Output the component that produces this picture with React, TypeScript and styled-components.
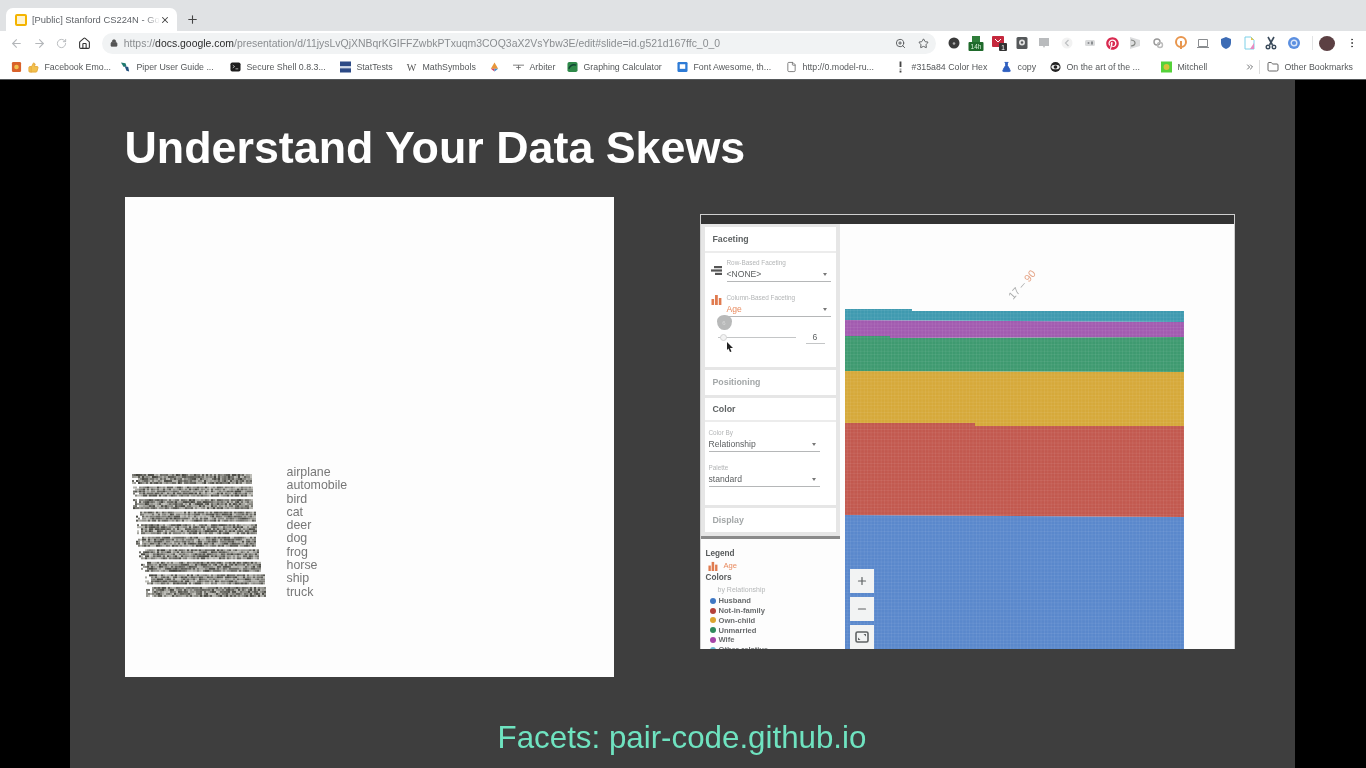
import React from 'react';
import styled, { createGlobalStyle } from 'styled-components';
import { ArrowLeft, ArrowRight, ChevronsRight, File, FlaskConical, Folder, Home, Lock, Minus, MoreVertical, Plus, RotateCw, Star, ThumbsUp, X, ZoomIn } from 'lucide-react';
import { FaPinterest } from 'react-icons/fa';

const GlobalStyle = createGlobalStyle`
  html, body {
    margin: 0;
    height: 768px;
    overflow: hidden;
    background: #000;
    font-family: 'Liberation Sans', Arial, sans-serif;
  }
`;

const Page = styled.div`
  width: 1366px;
  height: 768px;
  display: flex;
  flex-direction: column;
  overflow: hidden;
`;

const Chrome = styled.div`
  flex: none;
  height: 80px;
  background: #fff;
  border-bottom: 1px solid #55585a;
  box-sizing: border-box;
  filter: blur(0.35px);
`;

const TabStrip = styled.div`
  height: 31px;
  background: #e0e2e4;
  display: flex;
  align-items: flex-end;
  padding-left: 6px;
`;

const Tab = styled.div`
  width: 171px;
  height: 23px;
  background: #fff;
  border-radius: 7px 7px 0 0;
  display: flex;
  align-items: center;
  box-sizing: border-box;
  padding: 0 7px 0 9px;
  color: #5f6368;
  font-size: 9.4px;
`;

const TabIcon = styled.div`
  width: 12px;
  height: 12px;
  border: 2.5px solid #f4b400;
  border-radius: 2px;
  background: #fff3cf;
  box-sizing: border-box;
  margin-right: 5px;
  flex: none;
`;

const TabTitle = styled.span`
  flex: 1;
  white-space: nowrap;
  overflow: hidden;
  mask-image: linear-gradient(90deg, #000 88%, transparent 100%);
`;

const NewTab = styled.div`
  height: 23px;
  margin-left: 9px;
  display: flex;
  align-items: center;
  color: #444;
`;

const Toolbar = styled.div`
  height: 24px;
  display: flex;
  align-items: center;
  padding-left: 5px;
`;

const NavButton = styled.div<{ $color?: string; $left?: number }>`
  width: 22.7px;
  margin-left: ${(p) => p.$left || 0}px;
  display: flex;
  justify-content: center;
  color: ${(p) => p.$color || '#b4b7ba'};
`;

const Omnibox = styled.div`
  width: 834px;
  height: 21px;
  margin-left: 6px;
  background: #f1f3f4;
  border-radius: 11px;
  display: flex;
  align-items: center;
  padding: 0 1px 0 8px;
  box-sizing: border-box;
  color: #8a8d90;
  font-size: 10.45px;
  flex: none;
`;

const Url = styled.span`
  flex: 1;
  margin-left: 6px;
  white-space: nowrap;
  b {
    font-weight: 400;
    color: #2c2c2c;
  }
`;

const OmniIcon = styled.div`
  width: 23px;
  display: flex;
  justify-content: center;
  color: #55585a;
`;

const Extensions = styled.div`
  display: flex;
  align-items: center;
  margin-left: 6.6px;
`;

const ExtensionSlot = styled.div`
  width: 22.7px;
  height: 24px;
  display: flex;
  align-items: center;
  justify-content: center;
`;

const ExtensionDivider = styled.div`
  width: 1px;
  height: 14px;
  margin-left: 7px;
  background: #e3e4e5;
`;

const Avatar = styled.div`
  width: 16px;
  height: 15px;
  border-radius: 50%;
  background: #5c4043;
  margin-left: 6px;
`;

const BookmarkBar = styled.div`
  height: 24px;
  display: flex;
  align-items: center;
  padding-left: 10.5px;
  font-size: 8.8px;
  color: #55585a;
`;

const Bookmark = styled.div<{ $width: number }>`
  width: ${(p) => p.$width}px;
  flex: none;
  display: flex;
  align-items: center;
  gap: 6px;
  white-space: nowrap;
`;

const FavSlot = styled.div`
  width: 11px;
  height: 12px;
  flex: none;
  display: flex;
  align-items: center;
  justify-content: center;
`;

const BarDivider = styled.div`
  width: 1px;
  height: 14px;
  background: #ddd;
  margin-right: 7px;
`;

const Stage = styled.div`
  flex: 1;
  background: #000;
  display: flex;
  justify-content: center;
  padding-right: 1px;
`;

const Slide = styled.div`
  width: 1225px;
  margin-right: 1px;
  background: #3e3e3e;
  display: flex;
  flex-direction: column;
  box-sizing: border-box;
  padding: 43px 0 0 55px;
  filter: blur(0.3px);
`;

const Title = styled.h1`
  margin: 0;
  height: 49px;
  line-height: 49px;
  font-size: 44.8px;
  font-weight: 700;
  color: #fff;
`;

const Figures = styled.div`
  display: flex;
  align-items: flex-start;
  margin-top: 25px;
`;

const ImagePanel = styled.div`
  width: 489px;
  height: 480px;
  background: #fdfdfd;
  box-sizing: border-box;
  padding: 0 0 77px 7px;
  display: flex;
  align-items: flex-end;
  flex: none;
`;

const ClassList = styled.ul`
  list-style: none;
  margin: 0 0 1px 19px;
  padding: 0;
  font-size: 12.4px;
  line-height: 13.32px;
  color: #777;
`;

const FacetsPanel = styled.div`
  width: 535px;
  height: 435px;
  margin: 17px 0 0 86px;
  flex: none;
  border: 1px solid #cfcfcf;
  border-bottom: 0;
  box-sizing: border-box;
  background: #fdfdfd;
  display: flex;
  flex-direction: column;
  overflow: hidden;
`;

const FacetsTop = styled.div`
  height: 9px;
  background: #333;
  flex: none;
`;

const FacetsBody = styled.div`
  flex: 1;
  min-height: 0;
  display: flex;
`;

const Sidebar = styled.div`
  width: 139px;
  flex: none;
  display: flex;
  flex-direction: column;
  background: #fdfdfd;
`;

const Cards = styled.div`
  background: #e6e6e6;
  height: 315px;
  box-sizing: border-box;
  padding: 3px 4px;
  display: flex;
  flex-direction: column;
  gap: 3px;
  border-bottom: 3px solid #8a8a8a;
  flex: none;
`;

const Card = styled.div<{ $height: number }>`
  height: ${(p) => p.$height}px;
  background: #fff;
  box-sizing: border-box;
  flex: none;
`;

const CardHead = styled.div<{ $muted?: boolean; $height?: number }>`
  height: ${(p) => p.$height || 22}px;
  display: flex;
  align-items: center;
  padding-left: 8px;
  font-size: 8.8px;
  font-weight: 700;
  color: ${(p) => (p.$muted ? '#a3a7a8' : '#5f6364')};
  border-bottom: ${(p) => (p.$muted ? '0' : '2px solid #ececec')};
`;

const FieldRow = styled.div`
  display: flex;
  align-items: flex-start;
`;

const FieldIcon = styled.div`
  width: 22px;
  display: flex;
  justify-content: flex-end;
  padding: 12px 5px 0 0;
  box-sizing: border-box;
  flex: none;
`;

const Field = styled.div<{ $width: number; $top: number; $left?: number }>`
  width: ${(p) => p.$width}px;
  margin: ${(p) => p.$top}px 0 0 ${(p) => p.$left || 0}px;
`;

const FieldLabel = styled.div`
  font-size: 6.4px;
  line-height: 8px;
  color: #b3b5b6;
`;

const FieldValue = styled.div<{ $accent?: boolean }>`
  height: 15px;
  box-sizing: border-box;
  display: flex;
  align-items: center;
  justify-content: space-between;
  padding-right: 4px;
  font-size: 8.6px;
  color: ${(p) => (p.$accent ? '#e88a5e' : '#5c5f60')};
  border-bottom: 1.5px solid #b5b7b8;
  &::after {
    content: '';
    border: 2.5px solid transparent;
    border-top: 3px solid #777;
    border-bottom: 0;
  }
`;

const SliderRow = styled.div`
  position: relative;
  height: 32px;
  display: flex;
  align-items: flex-end;
  padding-left: 13px;
`;

const SliderTrack = styled.div`
  width: 78px;
  height: 1px;
  background: #c4c6c7;
  margin-bottom: 11px;
  position: relative;
  &::before {
    content: '';
    position: absolute;
    left: 2px;
    top: -3px;
    width: 7px;
    height: 7px;
    border-radius: 50%;
    border: 1px solid #d4d4d4;
    box-sizing: border-box;
    background: #f3f3f3;
  }
`;

const SliderPin = styled.div`
  position: absolute;
  left: 12px;
  top: -2px;
  width: 15px;
  height: 15px;
  background: #b8b9b9;
  border-radius: 50% 50% 50% 50% / 45% 45% 62% 62%;
  color: #d8d8d8;
  font-size: 6px;
  display: flex;
  align-items: center;
  justify-content: center;
`;

const SliderValue = styled.div`
  width: 19px;
  margin: 0 0 5px 10px;
  border-bottom: 1px solid #c4c6c7;
  font-size: 8.6px;
  line-height: 12px;
  text-align: center;
  color: #5f6364;
`;

const Pointer = styled.svg`
  position: absolute;
  left: 22px;
  top: 25px;
`;

const Legend = styled.div`
  flex: 1;
  min-height: 0;
  overflow: hidden;
  padding: 9px 0 0 5px;
  font-size: 8.2px;
  line-height: 11.5px;
  color: #585b5c;
`;

const LegendHead = styled.div`
  font-weight: 700;
`;

const LegendAge = styled.div`
  display: flex;
  align-items: center;
  gap: 6px;
  padding-left: 2px;
  color: #e88a5e;
  font-size: 7.6px;
  height: 12.5px;
`;

const LegendSub = styled.div`
  padding-left: 12px;
  margin-bottom: 1px;
  font-size: 7px;
  color: #b5b7b8;
`;

const LegendItem = styled.div`
  display: flex;
  align-items: center;
  gap: 3px;
  height: 9.8px;
  padding-left: 4px;
  font-size: 7.6px;
  font-weight: 700;
  color: #6a6d6e;
`;

const Dot = styled.span<{ $color: string }>`
  width: 6px;
  height: 6px;
  border-radius: 50%;
  background: ${(p) => p.$color};
  flex: none;
`;

const ChartArea = styled.div`
  flex: 1;
  position: relative;
  min-width: 0;
  padding-top: 1px;
`;

const ChartSvg = styled.svg`
  display: block;
`;

const ZoomControls = styled.div`
  position: absolute;
  left: 10px;
  top: 345px;
  display: flex;
  flex-direction: column;
  gap: 4px;
`;

const ZoomButton = styled.div`
  width: 24px;
  height: 24px;
  background: #f2f3f3;
  display: flex;
  align-items: center;
  justify-content: center;
  color: #5f6364;
`;

const Footer = styled.div`
  margin: 43px 0 0 -55px;
  text-align: center;
  font-size: 31.3px;
  line-height: 36px;
  color: #6fe3c0;
`;

function mulberry(seed: number) {
  let a = seed;
  return () => {
    a = (a + 0x6d2b79f5) | 0;
    let t = Math.imul(a ^ (a >>> 15), 1 | a);
    t = (t + Math.imul(t ^ (t >>> 7), 61 | t)) ^ t;
    return ((t ^ (t >>> 14)) >>> 0) / 4294967296;
  };
}

// the embedding projector strips, one row of noisy thumbnails per class
const rowStarts = [0, 1, 1, 4, 5, 4, 7, 9, 13, 14];
const Strips: React.FC = () => {
  const rand = mulberry(42);
  const cells: React.ReactNode[] = [];
  rowStarts.forEach((start, row) => {
    const y0 = row * 12.55;
    for (let x = start; x < start + 119; x += 2) {
      for (let y = 0; y < 10; y += 2) {
        // edges of a row thin out
        if (x - start < 6 && rand() < 0.4) continue;
        const v = Math.floor(70 + rand() * 125);
        cells.push(<rect key={`${row}-${x}-${y}`} x={x} y={y0 + y} width={2} height={2} fill={`rgb(${v},${v},${v - 6})`} />);
      }
    }
  });
  return (
    <svg width={136} height={126} style={{ flex: 'none', filter: 'blur(0.7px)' }}>
      {cells}
    </svg>
  );
};

const bands = [
  { color: '#5a88cc', points: '5,290 344,292 344,424 5,424' },
  { color: '#c2594f', points: '5,198 135,198 135,201 344,201 344,292 5,290' },
  { color: '#d6a93a', points: '5,146 344,147 344,201 135,201 135,198 5,198' },
  { color: '#3e9a70', points: '5,111 50,111 50,113 344,112 344,147 5,146' },
  { color: '#a25bb0', points: '5,95 344,97 344,112 50,113 50,111 5,111' },
  { color: '#3f9ab0', points: '5,84 72,84 72,86 344,86 344,97 5,95' },
];

const FacetChart: React.FC = () => (
  <ChartSvg width={394} height={424}>
    <defs>
      <pattern id="cells" width={3.4} height={3.4} patternUnits="userSpaceOnUse">
        <path d="M0 0H3.4M0 0V3.4" stroke="#fff" strokeOpacity={0.14} strokeWidth={0.8} fill="none" />
      </pattern>
    </defs>
    {bands.map((b) => (
      <polygon key={b.color} points={b.points} fill={b.color} />
    ))}
    <rect x={5} y={84} width={339} height={340} fill="url(#cells)" />
    <text x={173} y={75} transform="rotate(-48 173 75)" fontSize={10.5} fill="#a8aaaa">
      17 – <tspan fill="#e5a588">90</tspan>
    </text>
  </ChartSvg>
);

const BarsIcon: React.FC<{ size?: number }> = ({ size = 11 }) => (
  <svg width={size} height={size} viewBox="0 0 11 11" fill="#e07b4f">
    <rect x={0.5} y={5} width={2.6} height={6} />
    <rect x={4} y={1} width={2.8} height={10} />
    <rect x={7.8} y={4} width={2.6} height={7} />
  </svg>
);

const RowsIcon: React.FC = () => (
  <svg width={11} height={11} viewBox="0 0 11 11" fill="#555">
    <rect x={3} y={1} width={8} height={2.2} />
    <rect x={0} y={4.4} width={11} height={2.2} />
    <rect x={4} y={7.8} width={7} height={2.2} />
  </svg>
);

const FitIcon: React.FC = () => (
  <svg width={14} height={12} viewBox="0 0 14 12" fill="#5f6364">
    <rect x={1} y={1} width={12} height={10} rx={1.5} fill="none" stroke="#5f6364" strokeWidth={1.6} />
    <path d="M3 9V6.500L5.500 9zM11 3v2.500L8.500 3z" />
  </svg>
);

const glyph = (body: React.ReactNode) => (
  <svg width={16} height={16} viewBox="0 0 16 16">
    {body}
  </svg>
);

const fav = (body: React.ReactNode) => (
  <svg width={12} height={12} viewBox="0 0 12 12">
    {body}
  </svg>
);

const extensions: React.ReactNode[] = [
  glyph(
    <>
      <circle cx={8} cy={8} r={5.5} fill="#3a3a3a" />
      <circle cx={8} cy={8.5} r={1.3} fill="#aaa" />
    </>
  ),
  glyph(
    <>
      <rect x={4} y={1} width={8} height={6} fill="#2f7d3a" />
      <rect x={0.5} y={7} width={15} height={9} rx={1} fill="#1f6a2b" />
      <text x={8} y={14} textAnchor="middle" fontSize={6.5} fill="#d8f0d8">14h</text>
    </>
  ),
  glyph(
    <>
      <rect x={1} y={1} width={12} height={11} rx={1} fill="#c5283d" />
      <path d="M4 4l3 3 3-3" stroke="#fff" fill="none" />
      <rect x={8} y={8} width={8} height={8} rx={1} fill="#333" />
      <text x={12} y={14.6} textAnchor="middle" fontSize={6.5} fill="#fff">1</text>
    </>
  ),
  glyph(
    <>
      <rect x={2.500} y={2} width={11} height={12} rx={1.5} fill="#55585a" />
      <circle cx={8} cy={7.5} r={3} fill="#e0e0e0" />
      <circle cx={8} cy={7.5} r={1.2} fill="#55585a" />
    </>
  ),
  glyph(<path d="M3 3h10v8H9l-1 2-1-2H3z" fill="#b9bbbd" />),
  glyph(
    <>
      <circle cx={8} cy={8} r={5.5} fill="#f2f2f2" />
      <path d="M9.500 5L6.500 8l3 3" fill="none" stroke="#bfc1c3" strokeWidth={1.3} />
    </>
  ),
  glyph(
    <>
      <rect x={3} y={5} width={10} height={6} rx={1.5} fill="#dadbdc" />
      <circle cx={6.500} cy={8} r={1} fill="#8a8d90" />
      <rect x={9} y={6.500} width={2} height={3} fill="#8a8d90" />
    </>
  ),
  <FaPinterest size={13} color="#d92a50" />,
  glyph(
    <>
      <path d="M3 2l10 3v6L3 14z" fill="#dcddde" />
      <path d="M4 5a5 3 0 014 3 5 3 0 01-4 3" fill="none" stroke="#80837f" strokeWidth={1.2} />
    </>
  ),
  glyph(
    <>
      <circle cx={7} cy={7} r={3} fill="none" stroke="#999" strokeWidth={1.4} />
      <circle cx={10} cy={10} r={2.5} fill="none" stroke="#bbb" strokeWidth={1.4} />
    </>
  ),
  glyph(
    <>
      <circle cx={8} cy={7} r={5} fill="none" stroke="#e8964e" strokeWidth={2} />
      <rect x={7} y={6} width={2} height={8} fill="#e8964e" />
    </>
  ),
  glyph(<path d="M3.500 4.500h9v7h-9zM2 12.500h12" fill="none" stroke="#8a8d90" />),
  glyph(<path d="M8 2l5 2v4c0 3-2 5-5 6-3-1-5-3-5-6V4z" fill="#3d6cb5" />),
  glyph(
    <>
      <path d="M4 2h6l3 3v9H4z" fill="#fff" stroke="#7cd0e8" />
      <path d="M10 2l3 3h-3z" fill="#e6c84c" />
      <path d="M13 8v6H9z" fill="#e88ac0" />
    </>
  ),
  glyph(
    <>
      <path d="M5 2l4.500 8M11 2L6.500 10" stroke="#3a4a5a" strokeWidth={1.6} />
      <circle cx={5} cy={12} r={1.8} fill="none" stroke="#3a4a5a" strokeWidth={1.4} />
      <circle cx={11} cy={12} r={1.8} fill="none" stroke="#3a4a5a" strokeWidth={1.4} />
    </>
  ),
  glyph(
    <>
      <circle cx={8} cy={8} r={6} fill="#5b8fe0" />
      <circle cx={8} cy={8} r={2.8} fill="none" stroke="#dbe6f8" strokeWidth={1.4} />
    </>
  ),
];

const bookmarks: { width: number; label: string; icon: React.ReactNode }[] = [
  { width: 92, label: 'Facebook Emo...', icon: <ThumbsUp size={11} color="#e6a93a" fill="#f2c14e" /> },
  {
    width: 110,
    label: 'Piper User Guide ...',
    icon: fav(
      <>
        <path d="M1 1l5 1 1 3-3 1z" fill="#1f7a70" />
        <path d="M5 5l4 1 1 5-3-1z" fill="#24527f" />
      </>
    ),
  },
  {
    width: 110,
    label: 'Secure Shell 0.8.3...',
    icon: fav(
      <>
        <rect x={0.5} y={1} width={11} height={10} rx={2} fill="#1e1e1e" />
        <path d="M3 4l2 1.500L3 7M6 8h3" stroke="#ddd" strokeWidth={0.8} fill="none" />
      </>
    ),
  },
  {
    width: 66,
    label: 'StatTests',
    icon: fav(
      <>
        <rect x={0} y={0} width={12} height={12} fill="#2c4a86" />
        <rect x={0} y={5} width={12} height={2.5} fill="#cfd8e8" />
      </>
    ),
  },
  {
    width: 83,
    label: 'MathSymbols',
    icon: fav(<text x={6} y={10} textAnchor="middle" fontSize={11} fontFamily="Liberation Serif" fill="#555">W</text>),
  },
  {
    width: 24,
    label: '',
    icon: fav(
      <>
        <path d="M6 1l4 7H2z" fill="#e8963a" />
        <path d="M2 8h4v3z" fill="#d23f6a" />
        <path d="M6 8h4l-4 3z" fill="#3d8fd0" />
      </>
    ),
  },
  {
    width: 54,
    label: 'Arbiter',
    icon: fav(<path d="M0 4h12M6 4v5M3.500 6.500h5" stroke="#666" strokeWidth={0.9} />),
  },
  {
    width: 110,
    label: 'Graphing Calculator',
    icon: fav(
      <>
        <rect x={0.5} y={0.5} width={11} height={11} rx={2} fill="#2f8a4a" />
        <path d="M2 8c2-5 5-5 8-4" stroke="#143" strokeWidth={1.6} fill="none" />
      </>
    ),
  },
  {
    width: 109,
    label: 'Font Awesome, th...',
    icon: fav(
      <>
        <rect x={0.5} y={0.5} width={11} height={11} rx={1.5} fill="#2e7bd6" />
        <rect x={3} y={3} width={6} height={5} fill="#fff" />
      </>
    ),
  },
  { width: 109, label: 'http://0.model-ru...', icon: <File size={12} color="#777" /> },
  {
    width: 106,
    label: '#315a84 Color Hex',
    icon: fav(
      <>
        <rect x={5} y={0} width={2} height={6} fill="#444" />
        <rect x={5} y={7.500} width={2} height={2} fill="#aaa" />
        <rect x={5} y={10} width={2} height={2} fill="#444" />
      </>
    ),
  },
  { width: 49, label: 'copy', icon: <FlaskConical size={12} color="#2f5fc0" fill="#2f5fc0" /> },
  {
    width: 111,
    label: 'On the art of the ...',
    icon: fav(
      <>
        <circle cx={6} cy={6} r={5.5} fill="#222" />
        <ellipse cx={6} cy={6} rx={4.500} ry={2.500} fill="#eee" />
        <circle cx={6} cy={6} r={2} fill="#222" />
      </>
    ),
  },
  {
    width: 84,
    label: 'Mitchell',
    icon: fav(
      <>
        <rect x={0} y={0} width={12} height={12} fill="#55d23a" />
        <circle cx={6} cy={6} r={3.2} fill="#d8c23a" />
      </>
    ),
  },
];

const legend = [
  ['Husband', '#3f78c4'],
  ['Not-in-family', '#b5413a'],
  ['Own-child', '#dca52f'],
  ['Unmarried', '#2f8a5c'],
  ['Wife', '#a545a8'],
  ['Other-relative', '#6ab7d0'],
];

const classes = ['airplane', 'automobile', 'bird', 'cat', 'deer', 'dog', 'frog', 'horse', 'ship', 'truck'];

const SelectField: React.FC<{ label: string; value: string; accent?: boolean; width: number; top: number; left?: number }> = ({ label, value, accent, width, top, left }) => (
  <Field $width={width} $top={top} $left={left}>
    <FieldLabel>{label}</FieldLabel>
    <FieldValue $accent={accent}>{value}</FieldValue>
  </Field>
);

const App: React.FC = () => (
  <Page>
    <GlobalStyle />
    <Chrome>
      <TabStrip>
        <Tab>
          <TabIcon />
          <TabTitle>[Public] Stanford CS224N - Go</TabTitle>
          <X size={10} color="#444" strokeWidth={2.5} />
        </Tab>
        <NewTab>
          <Plus size={13} strokeWidth={2} />
        </NewTab>
      </TabStrip>
      <Toolbar>
        <NavButton><ArrowLeft size={13} /></NavButton>
        <NavButton><ArrowRight size={13} /></NavButton>
        <NavButton><RotateCw size={11} /></NavButton>
        <NavButton $color="#333"><Home size={13} /></NavButton>
        <Omnibox>
          <Lock size={8} color="#555" fill="#555" />
          <Url>
            https://<b>docs.google.com</b>/presentation/d/11jysLvQjXNBqrKGIFFZwbkPTxuqm3COQ3aX2VsYbw3E/edit#slide=id.g521d167ffc_0_0
          </Url>
          <OmniIcon><ZoomIn size={11} /></OmniIcon>
          <OmniIcon><Star size={11} /></OmniIcon>
        </Omnibox>
        <Extensions>
          {extensions.map((icon, i) => (
            <ExtensionSlot key={i}>{icon}</ExtensionSlot>
          ))}
          <ExtensionDivider />
          <Avatar />
          <NavButton $color="#444" $left={5}><MoreVertical size={12} /></NavButton>
        </Extensions>
      </Toolbar>
      <BookmarkBar>
        <Bookmark $width={17}>
          <FavSlot>
            {fav(
              <>
                <rect x={1} y={0.5} width={10} height={11} rx={1.5} fill="#d9622b" />
                <circle cx={6} cy={6} r={2.5} fill="#f2c14e" />
              </>
            )}
          </FavSlot>
        </Bookmark>
        {bookmarks.map((b) => (
          <Bookmark key={b.label || b.width} $width={b.width}>
            <FavSlot>{b.icon}</FavSlot>
            {b.label}
          </Bookmark>
        ))}
        <Bookmark $width={14}><ChevronsRight size={10} /></Bookmark>
        <BarDivider />
        <Bookmark $width={90}>
          <Folder size={12} color="#666" />
          Other Bookmarks
        </Bookmark>
      </BookmarkBar>
    </Chrome>
    <Stage>
      <Slide>
        <Title>Understand Your Data Skews</Title>
        <Figures>
          <ImagePanel>
            <Strips />
            <ClassList>
              {classes.map((c) => (
                <li key={c}>{c}</li>
              ))}
            </ClassList>
          </ImagePanel>
          <FacetsPanel>
            <FacetsTop />
            <FacetsBody>
              <Sidebar>
                <Cards>
                  <Card $height={140}>
                    <CardHead $height={24}>Faceting</CardHead>
                    <FieldRow>
                      <FieldIcon><RowsIcon /></FieldIcon>
                      <SelectField label="Row-Based Faceting" value="<NONE>" width={104} top={6} />
                    </FieldRow>
                    <FieldRow>
                      <FieldIcon><BarsIcon /></FieldIcon>
                      <SelectField label="Column-Based Faceting" value="Age" accent width={104} top={12} />
                    </FieldRow>
                    <SliderRow>
                      <SliderPin>6</SliderPin>
                      <SliderTrack />
                      <SliderValue>6</SliderValue>
                      <Pointer width={7} height={10} viewBox="0 0 7 10">
                        <path d="M0 0l6 6H3l1.500 3.500-1.500.5L1.500 6.500 0 8z" fill="#222" />
                      </Pointer>
                    </SliderRow>
                  </Card>
                  <Card $height={25}>
                    <CardHead $muted $height={23}>Positioning</CardHead>
                  </Card>
                  <Card $height={107}>
                    <CardHead>Color</CardHead>
                    <SelectField label="Color By" value="Relationship" width={111} top={7} left={4} />
                    <SelectField label="Palette" value="standard" width={111} top={12} left={4} />
                  </Card>
                  <Card $height={24}>
                    <CardHead $muted $height={24}>Display</CardHead>
                  </Card>
                </Cards>
                <Legend>
                  <LegendHead>Legend</LegendHead>
                  <LegendAge><BarsIcon size={10} />Age</LegendAge>
                  <LegendHead>Colors</LegendHead>
                  <LegendSub>by Relationship</LegendSub>
                  {legend.map(([name, color]) => (
                    <LegendItem key={name}>
                      <Dot $color={color} />
                      {name}
                    </LegendItem>
                  ))}
                </Legend>
              </Sidebar>
              <ChartArea>
                <FacetChart />
                <ZoomControls>
                  <ZoomButton><Plus size={12} strokeWidth={2.4} /></ZoomButton>
                  <ZoomButton><Minus size={12} strokeWidth={2.4} /></ZoomButton>
                  <ZoomButton><FitIcon /></ZoomButton>
                </ZoomControls>
              </ChartArea>
            </FacetsBody>
          </FacetsPanel>
        </Figures>
        <Footer>Facets: pair-code.github.io</Footer>
      </Slide>
    </Stage>
  </Page>
);

export default App;
